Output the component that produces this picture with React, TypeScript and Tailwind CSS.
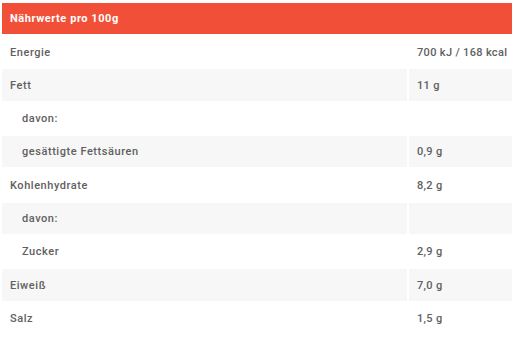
import React from "react";

const rows: { label: string; value: string; indent?: boolean }[] = [
  { label: "Energie", value: "700 kJ / 168 kcal" },
  { label: "Fett", value: "11 g" },
  { label: "davon:", value: "", indent: true },
  { label: "gesättigte Fettsäuren", value: "0,9 g", indent: true },
  { label: "Kohlenhydrate", value: "8,2 g" },
  { label: "davon:", value: "", indent: true },
  { label: "Zucker", value: "2,9 g", indent: true },
  { label: "Eiweiß", value: "7,0 g" },
  { label: "Salz", value: "1,5 g" },
];

export default function App() {
  return (
    <div className="w-[512px] h-[341px] overflow-hidden bg-white" style={{ fontFamily: "Roboto, 'Liberation Sans', sans-serif" }}>
      <table className="w-[640px] border-separate border-spacing-[2px] mt-[0.5px] table-fixed">
        <colgroup>
          <col className="w-[405px]" />
          <col />
        </colgroup>
        <thead>
          <tr className="h-[31.7px]">
            <th colSpan={2} className="bg-[#f24f38] text-white text-left font-bold text-[11px] tracking-[0.05em] px-2 pt-[2px] pb-0">
              Nährwerte pro 100g
            </th>
          </tr>
        </thead>
        <tbody>
          {rows.map((r, i) => (
            <tr key={i} className="h-[31.3px]">
              <td className={`${i % 2 === 1 ? "bg-[#f7f7f7]" : "bg-white"} text-[11px] font-medium tracking-[0.05em] text-[#606060] pt-[2px] pb-0 ${r.indent ? "pl-5" : "pl-2"} pr-2`}>
                {r.label}
              </td>
              <td className={`${i % 2 === 1 ? "bg-[#f7f7f7]" : "bg-white"} text-[11px] font-medium tracking-[0.03em] text-[#606060] pt-[2px] pb-0 px-2`}>
                {r.value}
              </td>
            </tr>
          ))}
        </tbody>
      </table>
    </div>
  );
}
